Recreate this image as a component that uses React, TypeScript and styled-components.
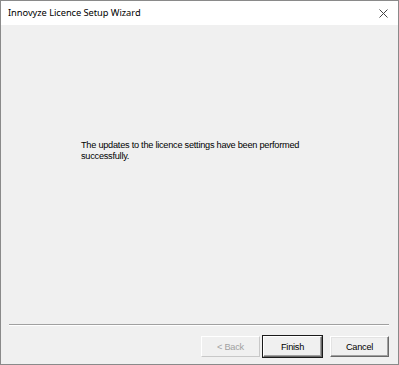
import styled, { createGlobalStyle } from "styled-components";

const GlobalStyle = createGlobalStyle`
    html, body {
        margin: 0;
        padding: 0;
        background: #ffffff;
    }
    * {
        box-sizing: border-box;
    }
`

type ButtonProps = {
    $isDefault?: boolean;
}

export default function App() {
    return (
        <>
            <GlobalStyle/>
            <StyledWindow>
                <TitleBar>
                    <Title>Innovyze Licence Setup Wizard</Title>
                    <CloseButton aria-label="Close">
                        <svg width="9" height="9" viewBox="0 0 9 9">
                            <path d="M0.5 0.5 L8.5 8.5 M8.5 0.5 L0.5 8.5" stroke="#444" strokeWidth="1" fill="none"/>
                        </svg>
                    </CloseButton>
                </TitleBar>
                <Body>
                    <Content>
                        <Message>
                            The updates to the licence settings have been performed
                            <br/>successfully.
                        </Message>
                    </Content>
                    <Separator/>
                    <ButtonRow>
                        <WizardButton disabled>&lt; Back</WizardButton>
                        <WizardButton $isDefault>Finish</WizardButton>
                        <CancelButton>Cancel</CancelButton>
                    </ButtonRow>
                </Body>
            </StyledWindow>
        </>
    );
}

const StyledWindow = styled.div`
    width: 399px;
    height: 365px;
    border: 1px solid #8a8a8a;
    display: flex;
    flex-direction: column;
    background: #f0f0f0;
`

const TitleBar = styled.div`
    height: 24px;
    background: #ffffff;
    display: flex;
    align-items: center;
    justify-content: space-between;
    padding-left: 7px;
    padding-right: 7px;
`

const Title = styled.span`
    font-family: "Noto Sans", "Open Sans", sans-serif;
    font-size: 9.3px;
    letter-spacing: -0.05px;
    color: #000000;
    margin-top: -1px;
`

const CloseButton = styled.div`
    width: 16px;
    height: 24px;
    display: flex;
    align-items: center;
    justify-content: center;
`

const Body = styled.div`
    flex: 1;
    display: flex;
    flex-direction: column;
    background: #f0f0f0;
`

const Content = styled.div`
    flex: 1;
    padding: 115px 0 0 80px;
`

const Message = styled.p`
    margin: 0;
    font-family: "Liberation Sans", Arial, sans-serif;
    font-size: 9.2px;
    letter-spacing: -0.25px;
    line-height: 11px;
    color: #000000;
`

const Separator = styled.div`
    margin: 0 9px 0 8px;
    height: 2px;
    border-top: 1px solid #a0a0a0;
    border-bottom: 1px solid #ffffff;
`

const ButtonRow = styled.div`
    display: flex;
    justify-content: flex-end;
    gap: 3px;
    padding: 10px 9px 7px 0;
`

const WizardButton = styled.button<ButtonProps>`
    width: 59px;
    height: 21px;
    padding: 0;
    font-family: "Liberation Sans", Arial, sans-serif;
    font-size: 9.2px;
    letter-spacing: -0.25px;
    color: #000000;
    background: #f0f0f0;
    border-style: solid;
    border-width: 1px;
    border-color: #ffffff #696969 #696969 #ffffff;
    box-shadow: ${p => p.$isDefault
            ? "0 0 0 1px #1a1a1a, inset -1px -1px 0 #a0a0a0"
            : "inset -1px -1px 0 #a0a0a0, inset 1px 1px 0 #e3e3e3"};

    &:disabled {
        color: #a0a0a0;
        border-color: #ffffff #c8c8c8 #c8c8c8 #ffffff;
        box-shadow: none;
    }
`

const CancelButton = styled(WizardButton)`
    margin-left: 5px;
`
